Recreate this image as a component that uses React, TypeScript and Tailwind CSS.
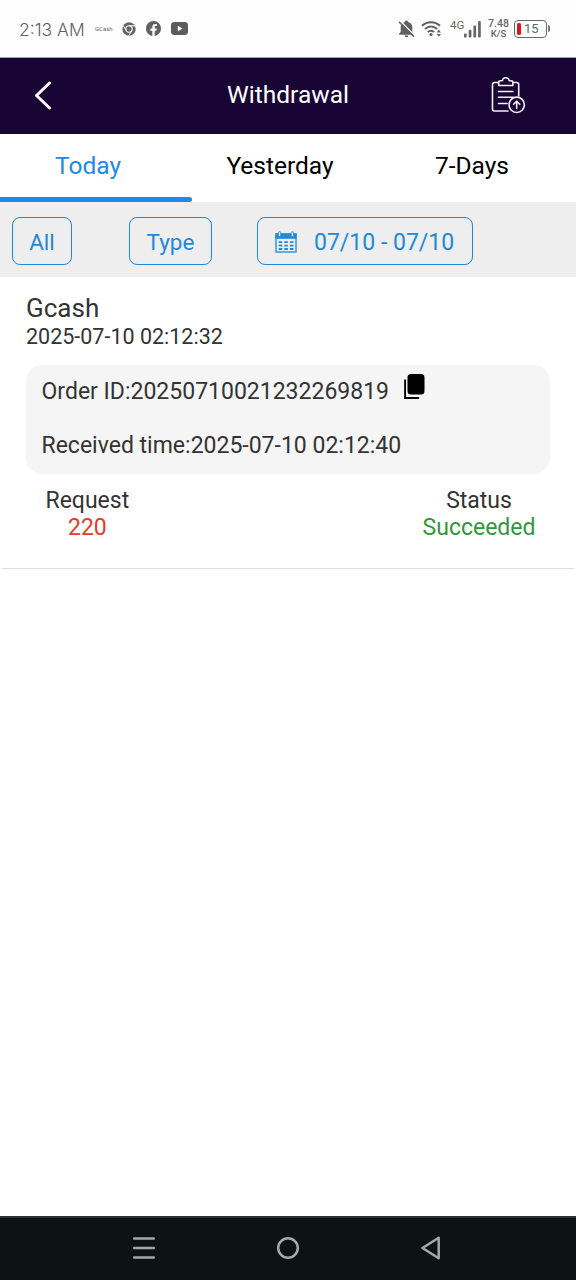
import React, { useState } from "react";

const tabs = ["Today", "Yesterday", "7-Days"];

const record = {
  channel: "Gcash",
  createdAt: "2025-07-10 02:12:32",
  orderId: "20250710021232269819",
  receivedAt: "2025-07-10 02:12:40",
  request: "220",
  status: "Succeeded",
};

/**
 * StatusBar Component
 * Clock, notification icons and device indicators
 */
const StatusBar: React.FC = () => (
  <div className="flex h-[57px] items-center justify-between bg-[#fefefe] pr-[26px] pl-[19px] text-[#666]">
    <div className="flex items-center">
      <span className="mt-[2px] w-[75px] font-['Inter'] text-[17.5px] leading-6 font-light whitespace-nowrap text-[#5f5f5f]">
        2:13 AM
      </span>
      <span className="w-[28px] pl-px text-[6px] leading-3">GCash</span>

      {/* Chrome */}
      <svg className="mr-[10px] h-[14px] w-[14px]" viewBox="0 0 14 14" fill="none">
        <circle cx="7" cy="7" r="6.7" fill="#646464" />
        <circle cx="7" cy="7" r="3.2" stroke="#fefefe" strokeWidth="1.1" />
        <path
          d="M7 3.8h6M4.3 8.6 1.2 3.5M9.7 8.6 6.8 13.7"
          stroke="#fefefe"
          strokeWidth="1"
        />
      </svg>

      {/* Facebook */}
      <svg className="mr-[10px] h-[15px] w-[15px]" viewBox="0 0 24 24">
        <path
          fill="#606060"
          d="M24 12.07C24 5.4 18.63 0 12 0S0 5.4 0 12.07C0 18.1 4.39 23.1 10.13 24v-8.44H7.08v-3.49h3.05V9.41c0-3.02 1.79-4.7 4.53-4.7 1.31 0 2.68.24 2.68.24v2.97h-1.51c-1.49 0-1.96.93-1.96 1.89v2.26h3.33l-.53 3.49h-2.8V24C19.61 23.1 24 18.1 24 12.07z"
        />
      </svg>

      {/* YouTube */}
      <svg className="h-[13px] w-[17px]" viewBox="0 0 17 13">
        <rect width="17" height="13" rx="3.4" fill="#5c5c5c" />
        <path d="m6.8 3.8 4.8 2.7-4.8 2.7z" fill="#fefefe" />
      </svg>
    </div>

    <div className="flex items-center">
      {/* Muted bell */}
      <svg className="mr-[6px] h-[18px] w-[17px]" viewBox="0 0 17 18" fill="none">
        <path
          d="M8.5.6c.9 0 1.5.6 1.5 1.4 2.7.6 4.300 2.600 4.300 5.200V12l1.700 1.700v1H1v-1L2.700 12V7.200C2.700 4.600 4.300 2.600 7 2c0-.8.6-1.400 1.500-1.400zM6.600 15.400h3.800a1.900 1.900 0 0 1-3.800 0z"
          fill="#606060"
        />
        <path d="M2.2 1 16.800 15.600" stroke="#fefefe" strokeWidth="1.500" />
        <path d="M1 1.800 15.800 16.600" stroke="#606060" strokeWidth="1.500" />
      </svg>

      {/* Wifi */}
      <svg className="mr-[8px] h-[17px] w-[21px]" viewBox="0 0 21 17" fill="none">
        <path
          d="M1 5.8C6 .9 14 .9 19 5.8M4 9C7.5 5.6 12.5 5.6 16 9M6.9 12.1c1.8-1.8 4.4-1.8 6.2 0"
          stroke="#606060"
          strokeWidth="2"
        />
        <circle cx="10" cy="14.5" r="1.6" fill="#606060" />
        <path d="m17.8 9.500 2.100 2.900h-4.200zM17.800 16.800l2.100-2.900h-4.200z" fill="#606060" />
      </svg>

      <span className="mb-[7px] w-[14px] text-[11.5px] leading-3">4G</span>
      <svg className="mr-[7px] h-[18px] w-[17px]" viewBox="0 0 17 18" fill="#666">
        <rect x="0" y="13.5" width="2.7" height="4" rx="1" />
        <rect x="4.7" y="9.7" width="2.7" height="7.8" rx="1" />
        <rect x="9.4" y="5.5" width="2.7" height="12" rx="1" />
        <rect x="14.1" y="1" width="2.7" height="16.5" rx="1" />
      </svg>

      <div className="mr-[5px] flex w-[21px] flex-col items-center pt-px font-medium">
        <span className="text-[10.5px] leading-[10px]">7.48</span>
        <span className="text-[9.5px] leading-[10px]">K/S</span>
      </div>

      {/* Battery */}
      <div className="flex h-[18px] w-[33px] items-center rounded-[4px] border-[1.5px] border-[#666] pl-[2px]">
        <div className="h-[12px] w-[4px] rounded-[1.5px] bg-[#e3131b]" />
        <span className="pl-[3px] text-[13px] leading-4">15</span>
      </div>
      <div className="ml-px h-[7px] w-[2px] rounded-r bg-[#777]" />
    </div>
  </div>
);

const Header: React.FC = () => (
  <header className="grid h-[77px] grid-cols-3 items-center border-t border-[#a5a0b4] bg-[#190535] pb-[2px] text-white">
    <button className="ml-[34px] h-[30px] w-[20px]" aria-label="Back">
      <svg className="h-[30px] w-[20px]" viewBox="0 0 20 30" fill="none">
        <path
          d="M15.5 3 2.5 15.5l13 12.5"
          stroke="#fff"
          strokeWidth="3"
          strokeLinecap="round"
          strokeLinejoin="round"
        />
      </svg>
    </button>
    <h1 className="text-center text-[24.5px] leading-8">Withdrawal</h1>
    <button className="mr-[50px] h-[38px] w-[36px] justify-self-end" aria-label="Withdrawal records">
      <svg
        className="h-[38px] w-[36px]"
        viewBox="0 0 36 38"
        fill="none"
        stroke="#f3eef8"
        strokeWidth="1.6"
        strokeLinecap="round"
        strokeLinejoin="round"
      >
        <path d="M18 35H4.5A2 2 0 0 1 2.5 33V8.5A2 2 0 0 1 4.5 6.5H8.5M23.5 6.5h3.2a2 2 0 0 1 2 2V20" />
        <path d="M8.7 9.5V6.3c0-1 .8-1.6 1.8-1.6h1.7C12.7 3 13.9 1.8 15.8 1.8S18.9 3 19.4 4.7h1.7c1 0 1.8.6 1.8 1.6v3.2z" />
        <path d="M8.5 15.5h14.5M8.5 21.3h14.5M8.5 27.5h8.5" />
        <circle cx="26.7" cy="28.8" r="7.7" />
        <path d="M26.7 32.3v-7M23.6 28.3l3.1-3.1 3.1 3.1" />
      </svg>
    </button>
  </header>
);

const CalendarIcon: React.FC = () => (
  <svg className="h-[22px] w-[22px]" viewBox="0 0 22 22" fill="none">
    <rect x="1" y="3" width="20" height="18" stroke="#2189d8" strokeWidth="1.3" />
    <path d="M.4 2.4h21.2v5.4H.4z" fill="#2189d8" />
    <rect x="3.5" y=".6" width="2.2" height="5" rx="1.1" fill="#eee" stroke="#2189d8" strokeWidth=".8" />
    <rect x="16.3" y=".6" width="2.2" height="5" rx="1.1" fill="#eee" stroke="#2189d8" strokeWidth=".8" />
    <path
      d="M3.7 11.2h3.6m2 0h3.6m2 0h3.6M3.7 14.6h3.6m2 0h3.6m2 0h3.6M3.7 18h3.6m2 0h3.6m2 0h3.6"
      stroke="#2189d8"
      strokeWidth="1.8"
    />
  </svg>
);

const Filters: React.FC = () => (
  <div className="flex h-[75px] items-center bg-[#eee] pt-[2px] pl-3 text-[22.5px] leading-7 text-[#2189d8]">
    <button className="h-12 w-[60px] rounded-lg border border-[#2189d8] pt-[2px]">All</button>
    <button className="ml-[57px] h-12 w-[83px] rounded-lg border border-[#2189d8] pt-[2px]">Type</button>
    <button className="ml-[45px] flex h-12 w-[216px] items-center rounded-lg border border-[#2189d8] pt-[2px] pl-[17px]">
      <CalendarIcon />
      <span className="mt-[2px] ml-[17px] text-[23px] whitespace-nowrap">07/10 - 07/10</span>
    </button>
  </div>
);

const WithdrawalRecord: React.FC = () => (
  <section className="mx-[2px] h-[292px] border-b border-[#dcdcdc] px-6 pt-4 text-[#333]">
    <h2 className="text-[26px] leading-[30px]">{record.channel}</h2>
    <p className="text-[21.5px] leading-[27px]">{record.createdAt}</p>

    <div className="mt-[15px] h-[109px] rounded-2xl bg-[#f5f5f5] pt-[13px] pl-[15.5px] text-[23px] leading-7">
      <div className="flex">
        <span>Order ID:{record.orderId}</span>
        <button className="-mt-1 ml-[14.5px] h-[26px] w-[22px]" aria-label="Copy order ID">
          <svg className="h-[26px] w-[22px]" viewBox="0 0 22 26" fill="none">
            <rect x="3.5" y="0" width="17" height="20.5" rx="3.5" fill="#000" />
            <path d="M1.1 5.5v18.5h14" stroke="#000" strokeWidth="1.9" />
          </svg>
        </button>
      </div>
      <p className="mt-[26px]">Received time:{record.receivedAt}</p>
    </div>

    <div className="mt-[13px] flex justify-between text-center text-[23px] leading-[27px]">
      <div className="ml-[19.5px]">
        <p>Request</p>
        <p className="text-[#e63b24]">{record.request}</p>
      </div>
      <div className="mr-[14.5px]">
        <p>Status</p>
        <p className="text-[#31973a]">{record.status}</p>
      </div>
    </div>
  </section>
);

const NavigationBar: React.FC = () => (
  <nav className="flex h-16 items-center gap-[120px] border-t-2 border-[#2b3333] bg-[#0b1413] pb-[2px] pl-[132px]">
    <svg className="h-6 w-6" viewBox="0 0 24 24" fill="none">
      <path d="M2.3 2.5h19.4M2.3 12h19.4M2.3 21.5h19.4" stroke="#a2aaa9" strokeWidth="2.6" strokeLinecap="round" />
    </svg>
    <svg className="h-6 w-6" viewBox="0 0 24 24" fill="none">
      <circle cx="12" cy="12" r="9.8" stroke="#a2aaa9" strokeWidth="2.5" />
    </svg>
    <svg className="h-6 w-6" viewBox="0 0 24 24" fill="none">
      <path d="M18.7 1.7v20.6L2.5 12z" stroke="#a2aaa9" strokeWidth="2.5" strokeLinejoin="round" />
    </svg>
  </nav>
);

export default function App() {
  const [activeTab, setActiveTab] = useState("Today");

  return (
    <div className="flex h-[1280px] w-[576px] flex-col overflow-hidden bg-white font-['Roboto',sans-serif]">
      <StatusBar />
      <Header />

      <div className="grid h-[68px] grid-cols-3 bg-white">
        {tabs.map((tab) => (
          <button
            key={tab}
            onClick={() => setActiveTab(tab)}
            className={`flex flex-col justify-between pt-4 text-[24.5px] leading-8 ${
              activeTab === tab ? "text-[#2189e8]" : "text-black"
            }`}
          >
            <span className="w-[176px]">{tab}</span>
            {activeTab === tab && <span className="h-[5px] w-full rounded-r bg-[#2189e8]" />}
          </button>
        ))}
      </div>

      <Filters />
      <main className="flex-1">
        <WithdrawalRecord />
      </main>
      <NavigationBar />
    </div>
  );
}
